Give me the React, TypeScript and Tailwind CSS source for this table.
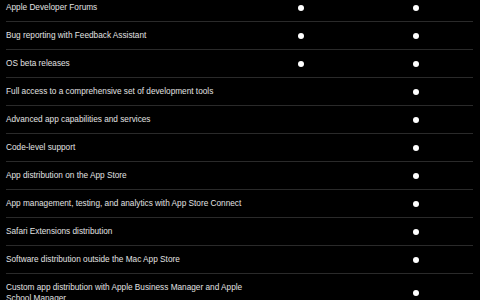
const rows: { label: string; a: boolean; b: boolean }[] = [
  { label: "Apple Developer Forums", a: true, b: true },
  { label: "Bug reporting with Feedback Assistant", a: true, b: true },
  { label: "OS beta releases", a: true, b: true },
  { label: "Full access to a comprehensive set of development tools", a: false, b: true },
  { label: "Advanced app capabilities and services", a: false, b: true },
  { label: "Code-level support", a: false, b: true },
  { label: "App distribution on the App Store", a: false, b: true },
  { label: "App management, testing, and analytics with App Store Connect", a: false, b: true },
  { label: "Safari Extensions distribution", a: false, b: true },
  { label: "Software distribution outside the Mac App Store", a: false, b: true },
  {
    label: "Custom app distribution with Apple Business Manager and Apple School Manager",
    a: false,
    b: true,
  },
]

function Dot({ on }: { on: boolean }) {
  return (
    <div className="flex items-center justify-center">
      {on && <span className="block w-[6px] h-[6px] rounded-full bg-white" />}
    </div>
  )
}

export default function App() {
  return (
    <div className="w-[480px] h-[300px] overflow-hidden bg-black">
      <div
        className="-mt-[6px] ml-[6px] w-[467px] text-[8.25px] text-[#e2e2e2]"
        style={{ fontFamily: '"Liberation Sans", Arial, sans-serif' }}
      >
        {rows.map((r) => (
          <div
            key={r.label}
            className="grid grid-cols-[237px_115px_115px] border-b border-[#2a2a2a]"
          >
            <div className="py-[8px] leading-[11px]">{r.label}</div>
            <Dot on={r.a} />
            <Dot on={r.b} />
          </div>
        ))}
      </div>
    </div>
  )
}
